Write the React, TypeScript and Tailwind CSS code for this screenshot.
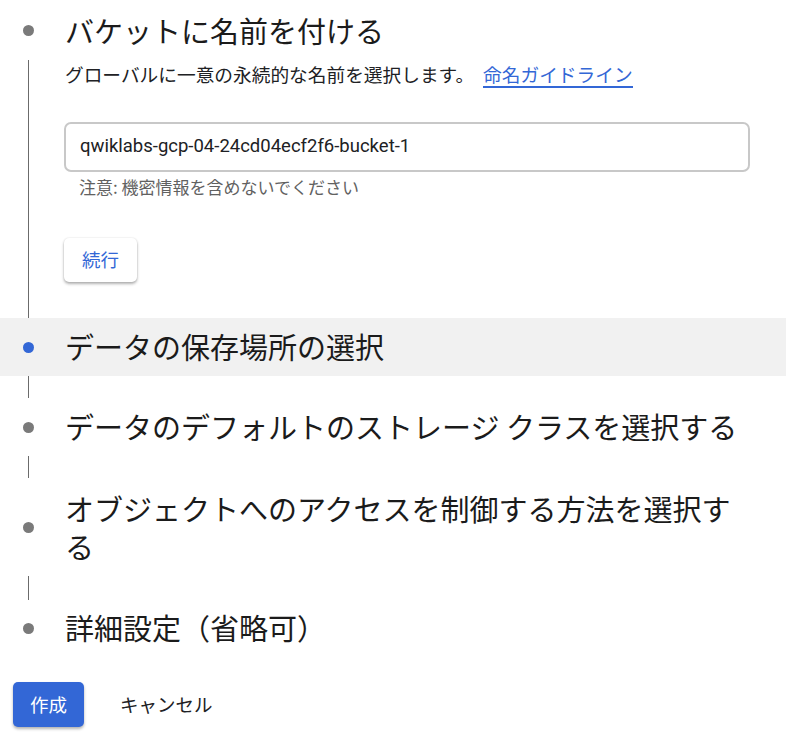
import React from "react";

const jp = { fontFamily: '"Noto Sans CJK JP", "Noto Sans", sans-serif' };
const roboto = { fontFamily: 'Roboto, "Noto Sans CJK JP", sans-serif' };

function Dot({ active }: { active?: boolean }) {
  return (
    <div className="w-[65px] shrink-0 flex items-center">
      <div
        className={
          "ml-[23px] w-[11px] h-[11px] rounded-full " +
          (active ? "bg-[#3367d6]" : "bg-[#7a7a7a]")
        }
      />
    </div>
  );
}

function Connector({ h }: { h: string }) {
  return (
    <div className={"flex " + h}>
      <div className="ml-[28px] w-px bg-[#6b6b6b]" />
    </div>
  );
}

export default function App() {
  return (
    <div className="w-[800px] h-[746px] bg-white overflow-hidden text-[#1b1b1b]" style={jp}>
      <div className="flex flex-col">
        {/* Step 1 header */}
        <div className="flex items-center h-[40px] mt-[10px]">
          <Dot />
          <div className="text-[29px] leading-[40px]">バケットに名前を付ける</div>
        </div>

        {/* Step 1 body */}
        <div className="flex mt-[10px]">
          <div className="w-[65px] shrink-0 flex">
            <div className="ml-[28px] w-px bg-[#6b6b6b]" />
          </div>
          <div className="flex flex-col items-start pb-[36px]">
            <div className="text-[18.7px] leading-[28px] text-[#202124] flex items-baseline">
              <span>グローバルに一意の永続的な名前を選択します。</span>
              <a className="ml-[9px] text-[#3367d6] border-b-2 border-[#3367d6] leading-[24px]">
                命名ガイドライン
              </a>
            </div>
            <div className="mt-[34px] -ml-px w-[686px] h-[50px] border-2 border-[#c8c8c8] rounded-[7px] flex items-center pl-[14px]">
              <span className="text-[18.5px] text-[#202124]" style={roboto}>
                qwiklabs-gcp-04-24cd04ecf2f6-bucket-1
              </span>
            </div>
            <div className="mt-[5px] pl-[14px] text-[17px] leading-[20px] text-[#616161]">
              注意: 機密情報を含めないでください
            </div>
            <button className="mt-[41px] -ml-px w-[73px] h-[44px] rounded-[5px] bg-white text-[#3367d6] text-[18.5px] shadow-[0_2px_3px_rgba(0,0,0,0.3),0_0_2px_rgba(0,0,0,0.12)]">
              続行
            </button>
          </div>
        </div>

        {/* Step 2 active */}
        <div className="flex items-center h-[58px] w-[786px] bg-[#f1f1f1]">
          <Dot active />
          <div className="text-[29px]">データの保存場所の選択</div>
        </div>

        <Connector h="h-[22px]" />

        {/* Step 3 */}
        <div className="flex items-center h-[58px]">
          <Dot />
          <div className="text-[29px]">データのデフォルトのストレージ クラスを選択する</div>
        </div>

        <Connector h="h-[22px]" />

        {/* Step 4 */}
        <div className="flex items-center h-[98px]">
          <Dot />
          <div className="text-[29px] leading-[38px] w-[685px]">
            オブジェクトへのアクセスを制御する方法を選択する
          </div>
        </div>

        <Connector h="h-[24px]" />

        {/* Step 5 */}
        <div className="flex items-center h-[56px]">
          <Dot />
          <div className="text-[29px]">詳細設定（省略可）</div>
        </div>

        {/* Actions */}
        <div className="flex items-center mt-[26px] pl-[13px]">
          <button className="w-[71px] h-[45px] rounded-[5px] bg-[#3367d6] text-white text-[18.5px] shadow-[0_2px_3px_rgba(0,0,0,0.3)]">
            作成
          </button>
          <button className="ml-[36px] text-[18.5px] text-[#202124]">キャンセル</button>
        </div>
      </div>
    </div>
  );
}
